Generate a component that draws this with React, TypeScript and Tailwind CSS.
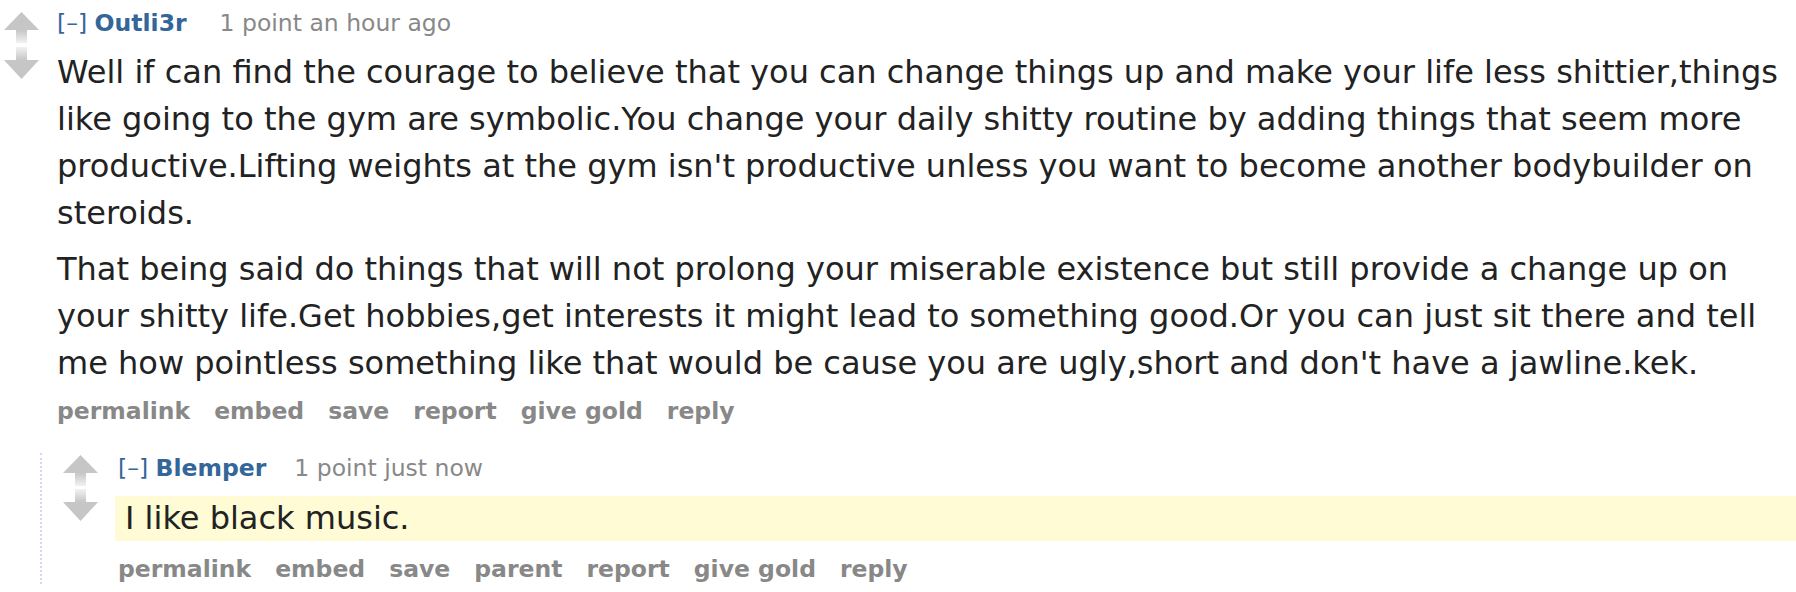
import React from "react";

const ARROW = "#c6c6c6";

function UpArrow({ id }: { id: string }) {
  return (
    <svg width="35" height="31" viewBox="0 0 35 31" className="block">
      <defs>
        <linearGradient id={id} x1="0" y1="0" x2="0" y2="1">
          <stop offset="0" stopColor={ARROW} />
          <stop offset="1" stopColor="#f2f2f2" />
        </linearGradient>
      </defs>
      <polygon points="17.5,0 35,18 0,18" fill={ARROW} />
      <rect x="12" y="18" width="11" height="13" fill={`url(#${id})`} />
    </svg>
  );
}

function DownArrow({ id }: { id: string }) {
  return (
    <svg width="35" height="32" viewBox="0 0 35 32" className="block">
      <defs>
        <linearGradient id={id} x1="0" y1="0" x2="0" y2="1">
          <stop offset="0" stopColor="#f2f2f2" />
          <stop offset="1" stopColor={ARROW} />
        </linearGradient>
      </defs>
      <rect x="12" y="0" width="11" height="13" fill={`url(#${id})`} />
      <polygon points="0,13 35,13 17.5,32" fill={ARROW} />
    </svg>
  );
}

function Tagline({ author, meta, gap }: { author: string; meta: string; gap: string }) {
  return (
    <div className="h-[30px] leading-[30px] text-[23.5px] whitespace-nowrap">
      <span className="text-[#369]">[–]</span>{" "}
      <span className="font-bold text-[#369]">{author}</span>
      <span className={gap + " text-[#888]"}>{meta}</span>
    </div>
  );
}

function Buttons({ items }: { items: string[] }) {
  return (
    <ul className="flex gap-[24px] h-[30px] leading-[30px] text-[23.5px] font-bold text-[#888] whitespace-nowrap">
      {items.map((t) => (
        <li key={t}>{t}</li>
      ))}
    </ul>
  );
}

export default function App() {
  return (
    <div className="w-[1796px] h-[592px] overflow-hidden bg-white font-['Verdana','DejaVu_Sans',sans-serif]">
      {/* parent comment */}
      <div className="flex">
        <div className="w-[57px] shrink-0 pl-[4px] pt-[12px] flex flex-col gap-[4px]">
          <UpArrow id="u1" />
          <DownArrow id="d1" />
        </div>
        <div className="flex-1 min-w-0 pt-[8px]">
          <Tagline author="Outli3r" meta="1 point an hour ago" gap="ml-[33px]" />
          <div className="mt-[11px] text-[32px] leading-[47px] text-[#222] whitespace-nowrap">
            <p>
              Well if can find the courage to believe that you can change things up and make your life less shittier,things
              <br />
              like going to the gym are symbolic.You change your daily shitty routine by adding things that seem more
              <br />
              productive.Lifting weights at the gym isn't productive unless you want to become another bodybuilder on
              <br />
              steroids.
            </p>
            <p className="mt-[9px]">
              That being said do things that will not prolong your miserable existence but still provide a change up on
              <br />
              your shitty life.Get hobbies,get interests it might lead to something good.Or you can just sit there and tell
              <br />
              me how pointless something like that would be cause you are ugly,short and don't have a jawline.kek.
            </p>
          </div>
          <div className="mt-[9px]">
            <Buttons items={["permalink", "embed", "save", "report", "give gold", "reply"]} />
          </div>
        </div>
      </div>

      {/* child comment */}
      <div className="mt-[27px] ml-[40px] border-l-2 border-dotted border-[#d6d6f5] flex">
        <div className="w-[73px] shrink-0 pl-[21px] pt-[2px] flex flex-col gap-[3px]">
          <UpArrow id="u2" />
          <DownArrow id="d2" />
        </div>
        <div className="flex-1 min-w-0">
          <div className="pl-[3px]">
            <Tagline author="Blemper" meta="1 point just now" gap="ml-[28px]" />
          </div>
          <div className="mt-[13px] h-[45px] bg-[#fffbd5] pl-[10px] text-[32px] leading-[45px] text-[#222] whitespace-nowrap">
            <p>I like black music.</p>
          </div>
          <div className="mt-[13px] pl-[3px]">
            <Buttons items={["permalink", "embed", "save", "parent", "report", "give gold", "reply"]} />
          </div>
        </div>
      </div>
    </div>
  );
}
